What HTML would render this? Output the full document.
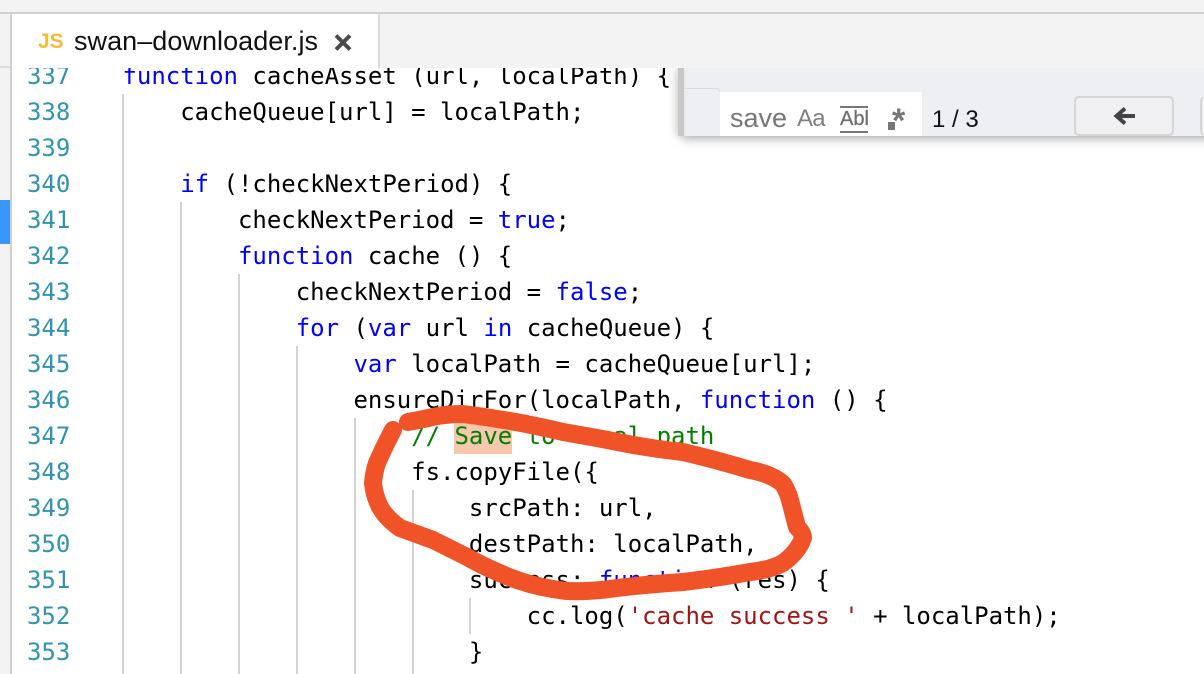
<!DOCTYPE html>
<html><head><meta charset="utf-8">
<style>
html,body{margin:0;padding:0;background:#fff}
#r{position:relative;width:1204px;height:674px;overflow:hidden;background:#fff}
.a{position:absolute}
.l{position:absolute;white-space:pre;font:24px/36px "DejaVu Sans Mono",monospace;color:#000;height:36px;letter-spacing:-.015px}
.n{left:27px;color:#2f93b1}
.c{left:122.5px}
b{font-weight:normal;color:#0000ff}
i{font-style:normal;color:#a31515}
u{text-decoration:none;color:#008000}
.g{position:absolute;width:2px;background:#d3d3d3}
</style></head><body><div id="r">
<div class="a" style="left:0;top:0;width:10px;height:674px;background:#f3f3f3"></div>
<div class="a" style="left:0;top:200px;width:10px;height:44px;background:#3a96fd"></div>
<div class="a" style="left:10px;top:66px;width:2px;height:608px;background:#cfcfcf"></div>

<div class="g" style="left:122px;top:94px;height:580px"></div>
<div class="g" style="left:180px;top:202px;height:472px"></div>
<div class="g" style="left:238px;top:274px;height:400px"></div>
<div class="g" style="left:296px;top:346px;height:328px"></div>
<div class="g" style="left:354px;top:418px;height:256px"></div>
<div class="g" style="left:412px;top:490px;height:184px"></div>
<div class="g" style="left:469px;top:598px;height:36px"></div>

<div class="a" style="left:454px;top:422px;width:58px;height:32px;background:#f8c8ae"></div>

<div class="l n" style="top:58px">337</div><div class="l c" style="top:58px"><b>function</b> cacheAsset (url, localPath) {</div>
<div class="l n" style="top:94px">338</div><div class="l c" style="top:94px">    cacheQueue[url] = localPath;</div>
<div class="l n" style="top:130px">339</div>
<div class="l n" style="top:166px">340</div><div class="l c" style="top:166px">    <b>if</b> (!checkNextPeriod) {</div>
<div class="l n" style="top:202px">341</div><div class="l c" style="top:202px">        checkNextPeriod = <b>true</b>;</div>
<div class="l n" style="top:238px">342</div><div class="l c" style="top:238px">        <b>function</b> cache () {</div>
<div class="l n" style="top:274px">343</div><div class="l c" style="top:274px">            checkNextPeriod = <b>false</b>;</div>
<div class="l n" style="top:310px">344</div><div class="l c" style="top:310px">            <b>for</b> (<b>var</b> url <b>in</b> cacheQueue) {</div>
<div class="l n" style="top:346px">345</div><div class="l c" style="top:346px">                <b>var</b> localPath = cacheQueue[url];</div>
<div class="l n" style="top:382px">346</div><div class="l c" style="top:382px">                ensureDirFor(localPath, <b>function</b> () {</div>
<div class="l n" style="top:418px">347</div><div class="l c" style="top:418px">                    <u>// Save to local path</u></div>
<div class="l n" style="top:454px">348</div><div class="l c" style="top:454px">                    fs.copyFile({</div>
<div class="l n" style="top:490px">349</div><div class="l c" style="top:490px">                        srcPath: url,</div>
<div class="l n" style="top:526px">350</div><div class="l c" style="top:526px">                        destPath: localPath,</div>
<div class="l n" style="top:562px">351</div><div class="l c" style="top:562px">                        success: <b>function</b> (res) {</div>
<div class="l n" style="top:598px">352</div><div class="l c" style="top:598px">                            cc.log(<i>'cache success '</i> + localPath);</div>
<div class="l n" style="top:634px">353</div><div class="l c" style="top:634px">                        }</div>

<!-- find widget -->
<div class="a" style="left:682px;top:68px;width:540px;height:68px;background:#eeeff2;box-shadow:0 2px 10px rgba(0,0,0,.38)"></div>
<div class="a" style="left:678px;top:68px;width:6px;height:68px;background:#c8c8c8;box-shadow:-3px 0 8px rgba(0,0,0,.12)"></div>
<div class="a" style="left:684px;top:88px;width:36px;height:4px;border-top:1px solid #d8d8d8;border-right:1px solid #d8d8d8;border-radius:0 5px 0 0;box-sizing:border-box"></div>
<div class="a" style="left:720px;top:92px;width:202px;height:44px;background:#fff"></div>
<div class="a" style="left:730px;top:100px;font:27px/36px 'Liberation Sans',sans-serif;color:#777;white-space:pre">save</div>
<div class="a" style="left:797px;top:101px;font:24px/36px 'Liberation Sans',sans-serif;color:#808080;letter-spacing:-.8px">Aa</div>
<div class="a" style="left:840px;top:106px;width:28px;height:27px;border-top:2px solid #777;border-bottom:2px solid #777;box-sizing:border-box"></div>
<div class="a" style="left:840px;top:107px;font:20px/24px 'Liberation Sans',sans-serif;color:#6f6f6f;-webkit-text-stroke:.3px #6f6f6f">Abl</div>
<div class="a" style="left:888px;top:122px;width:7px;height:8px;background:#777"></div>
<div class="a" style="left:892px;top:102px;font:bold 34px/38px 'Liberation Sans',sans-serif;color:#777">*</div>
<div class="a" style="left:932px;top:102px;font:24px/36px 'Liberation Sans',sans-serif;color:#111;white-space:pre">1 / 3</div>
<div class="a" style="left:1074px;top:96px;width:100px;height:40px;box-sizing:border-box;border:2px solid #d6d6d6;border-radius:5px;background:#f0f0f2"></div>
<svg class="a" style="left:1112px;top:104px" width="26" height="24"><path d="M23 12H5M13 4.5L4.5 12L13 19.5" stroke="#444" stroke-width="4" fill="none"/></svg>
<div class="a" style="left:1200px;top:96px;width:20px;height:40px;box-sizing:border-box;border:2px solid #d6d6d6;border-radius:5px;background:#f0f0f2"></div>

<!-- tab bar -->
<div class="a" style="left:0;top:0;width:1204px;height:68px;background:#f3f3f3"></div>
<div class="a" style="left:0;top:12px;width:1204px;height:2px;background:#d0d0d0"></div>
<div class="a" style="left:0;top:66px;width:10px;height:2px;background:#dcdcdc"></div>
<div class="a" style="left:10px;top:14px;width:2px;height:54px;background:#d0d0d0"></div>
<div class="a" style="left:12px;top:14px;width:366px;height:54px;background:#fff"></div>
<div class="a" style="left:378px;top:14px;width:2px;height:54px;background:#dcdcdc"></div>
<div class="a" style="left:38px;top:28px;font:bold 21px/28px 'Liberation Sans',sans-serif;color:#f6bb33">JS</div>
<div class="a" style="left:74px;top:24px;font:27px/34px 'Liberation Sans',sans-serif;color:#111;white-space:pre;letter-spacing:.05px">swan–downloader.js</div>
<svg class="a" style="left:333px;top:34px" width="20" height="18"><path d="M3 1.5L17 15.5M17 1.5L3 15.5" stroke="#4a4a4a" stroke-width="4" fill="none"/></svg>

<!-- annotation -->
<svg class="a" style="left:0;top:0" width="1204" height="674"><path d="M408 422 Q420 420 433 417 T463 414 Q487 417 510 421 T563 432 Q593 437 623 443 T683 452 Q717 460 750 470 Q772 474 783 484 Q788 492 790 500 L797 527 Q803 533 803 538 Q798 552 783 563 Q770 570 750 572 Q717 578 683 582 Q650 584 617 588 Q590 592 567 591 Q540 588 517 580 Q490 570 467 557 L433 540 L400 528 Q386 518 380 507 Q374 495 373 483 Q374 472 377 463 Q384 447 393 430" fill="none" stroke="#f05327" stroke-width="18" stroke-linecap="round" stroke-linejoin="round"/></svg>
</div></body></html>
